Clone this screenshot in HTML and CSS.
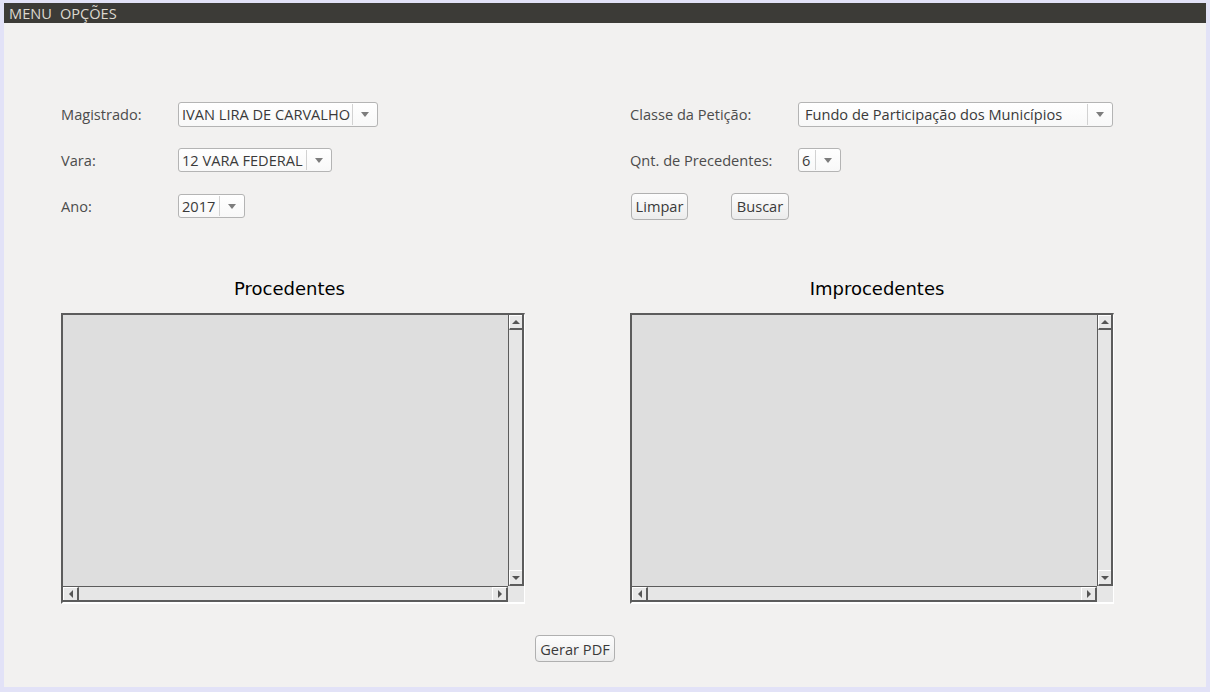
FILE: index.html
```html
<!DOCTYPE html>
<html lang="pt">
<head>
<meta charset="utf-8">
<title>Precedentes</title>
<link rel="stylesheet" href="styles.css">
</head>
<body>
<div class="window">
  <div class="menubar">
    <span class="menu-item">MENU</span>
    <span class="menu-item">OPÇÕES</span>
  </div>
  <div class="content">
    <div class="form">
      <div class="col col-left">
        <div class="row">
          <span class="label">Magistrado:</span>
          <div class="combo w-mag"><span class="combo-text">IVAN LIRA DE CARVALHO</span><span class="combo-arrow"><i class="tri-down"></i></span></div>
        </div>
        <div class="row">
          <span class="label">Vara:</span>
          <div class="combo w-vara"><span class="combo-text">12 VARA FEDERAL</span><span class="combo-arrow"><i class="tri-down"></i></span></div>
        </div>
        <div class="row">
          <span class="label">Ano:</span>
          <div class="combo w-ano"><span class="combo-text">2017</span><span class="combo-arrow"><i class="tri-down"></i></span></div>
        </div>
      </div>
      <div class="col col-right">
        <div class="row">
          <span class="label">Classe da Petição:</span>
          <div class="combo w-classe"><span class="combo-text pad-wide">Fundo de Participação dos Municípios</span><span class="combo-arrow"><i class="tri-down"></i></span></div>
        </div>
        <div class="row">
          <span class="label">Qnt. de Precedentes:</span>
          <div class="combo w-qnt"><span class="combo-text">6</span><span class="combo-arrow"><i class="tri-down"></i></span></div>
        </div>
        <div class="row row-buttons">
          <button class="btn btn-limpar">Limpar</button>
          <button class="btn btn-buscar">Buscar</button>
        </div>
      </div>
    </div>

    <div class="panels">
      <div class="panel panel-left">
        <div class="heading heading-left">Procedentes</div>
        <div class="pane">
          <div class="viewport"></div>
          <div class="vbar">
            <div class="sb-btn sb-up"><i class="tri-up"></i></div>
            <div class="sb-track"></div>
            <div class="sb-btn sb-down"><i class="tri-dn"></i></div>
          </div>
          <div class="hbar">
            <div class="sb-btn sb-left"><i class="tri-left"></i></div>
            <div class="sb-track"></div>
            <div class="sb-btn sb-right"><i class="tri-right"></i></div>
          </div>
          <div class="corner"></div>
        </div>
      </div>
      <div class="panel panel-right">
        <div class="heading heading-right">Improcedentes</div>
        <div class="pane">
          <div class="viewport"></div>
          <div class="vbar">
            <div class="sb-btn sb-up"><i class="tri-up"></i></div>
            <div class="sb-track"></div>
            <div class="sb-btn sb-down"><i class="tri-dn"></i></div>
          </div>
          <div class="hbar">
            <div class="sb-btn sb-left"><i class="tri-left"></i></div>
            <div class="sb-track"></div>
            <div class="sb-btn sb-right"><i class="tri-right"></i></div>
          </div>
          <div class="corner"></div>
        </div>
      </div>
    </div>

    <div class="footer">
      <button class="btn btn-pdf">Gerar PDF</button>
    </div>
  </div>
</div>
</body>
</html>
```

FILE: styles.css
```css
* { box-sizing: border-box; }
html, body { margin: 0; padding: 0; }
body {
  background: #e2e2f7;
  font-family: "Open Sans", "DejaVu Sans", sans-serif;
  font-size: 14.6px;
  color: #4a4a4a;
}
.window {
  margin: 3px 4px 5px 4px;
  height: 684px;
  background: #f2f1f0;
  display: flex;
  flex-direction: column;
}
.menubar {
  height: 20px;
  background: #3c3b37;
  color: #dcd8cf;
  display: flex;
  align-items: center;
  gap: 8px;
  padding-left: 5px;
  font-size: 14.6px;
  line-height: 20px;
}
.content {
  padding: 68px 0 0 57px;
  display: flex;
  flex-direction: column;
}
.form { display: flex; }
.col { display: flex; flex-direction: column; }
.col-left { width: 569px; }
.row {
  height: 46px;
  display: flex;
  align-items: center;
}
.col-left .label { width: 117px; }
.col-right .label { width: 168px; }
.label { color: #4c4c4c; white-space: nowrap; }

.combo {
  height: 25px;
  display: flex;
  align-items: stretch;
  background: linear-gradient(#ffffff, #f8f8f8);
  border: 1px solid #b4b4b4;
  border-radius: 3px;
  color: #3a3a3a;
}
.combo-text {
  flex: 1;
  display: flex;
  align-items: center;
  padding-left: 3px;
  white-space: nowrap;
  overflow: hidden;
}
.combo-text.pad-wide { padding-left: 6px; }
.combo-arrow {
  width: 25px;
  flex: none;
  border-left: 1px solid #d2d2d2;
  display: flex;
  align-items: center;
  justify-content: center;
  margin: 1px 0;
}
.tri-down {
  display: block;
  width: 0; height: 0;
  border-left: 4px solid transparent;
  border-right: 4px solid transparent;
  border-top: 5px solid #7d7d7d;
}
.w-mag { width: 200px; }
.w-vara { width: 154px; }
.w-ano { width: 67px; }
.w-classe { width: 315px; }
.w-qnt { width: 43px; }
.col-left .row:nth-child(2) .combo,
.col-left .row:nth-child(3) .combo,
.col-right .row:nth-child(2) .combo { height: 24px; }

.btn {
  font-family: inherit;
  font-size: 14.6px;
  color: #3a3a3a;
  height: 27px;
  padding: 0 2px;
  border: 1px solid #b0b0b0;
  border-radius: 4px;
  background: linear-gradient(#fdfdfd, #ececec);
  display: flex;
  align-items: center;
  justify-content: center;
  white-space: nowrap;
}
.row-buttons { gap: 43px; padding-left: 1px; }
.btn-limpar { width: 57px; }
.btn-buscar { width: 58px; }

.panels {
  display: flex;
  margin-top: 48px;
  gap: 105px;
}
.panel { display: flex; flex-direction: column; }
.panel-left { width: 464px; }
.panel-right { width: 484px; }
.heading {
  font-family: "DejaVu Sans", sans-serif;
  font-size: 18px;
  color: #000;
  height: 24px;
  line-height: 24px;
  text-align: center;
  margin-bottom: 12px;
}
.heading-left { padding-right: 7px; }
.heading-right { padding-left: 10px; }

.pane {
  height: 291px;
  display: grid;
  grid-template-columns: 1fr 16px;
  grid-template-rows: 1fr 16px;
  border-top: 2px solid #5c5c5c;
  border-left: 2px solid #5c5c5c;
  border-right: 1px solid #ffffff;
  border-bottom: 2px solid #ffffff;
  background: #dedede;
}
.viewport { background: #dedede; }
.vbar {
  display: flex;
  flex-direction: column;
  background: #e6e6e6;
  border-left: 1px solid #5c5c5c;
  border-right: 2px solid #5c5c5c;
}
.hbar {
  display: flex;
  background: #e6e6e6;
  border-top: 1px solid #5c5c5c;
  border-bottom: 2px solid #5c5c5c;
}
.sb-track { flex: 1; }
.corner { background: #e6e6e6; }
.sb-btn {
  background: #e8e8e8;
  display: flex;
  align-items: center;
  justify-content: center;
  border-top: 1px solid #ffffff;
  border-left: 1px solid #ffffff;
}
.sb-up, .sb-down { height: 15px; border-bottom: 2px solid #5c5c5c; }
.sb-down { height: 16px; }
.sb-left, .sb-right { width: 16px; border-right: 2px solid #5c5c5c; }
.tri-up, .tri-dn, .tri-left, .tri-right { display: block; width: 0; height: 0; }
.tri-up {
  border-left: 4px solid transparent;
  border-right: 4px solid transparent;
  border-bottom: 4px solid #555;
}
.tri-dn {
  border-left: 4px solid transparent;
  border-right: 4px solid transparent;
  border-top: 4px solid #555;
}
.tri-left {
  border-top: 4px solid transparent;
  border-bottom: 4px solid transparent;
  border-right: 4px solid #555;
}
.tri-right {
  border-top: 4px solid transparent;
  border-bottom: 4px solid transparent;
  border-left: 4px solid #555;
}

.footer {
  margin-top: 31px;
  padding-left: 474px;
  display: flex;
}
.btn-pdf { width: 80px; }
```
